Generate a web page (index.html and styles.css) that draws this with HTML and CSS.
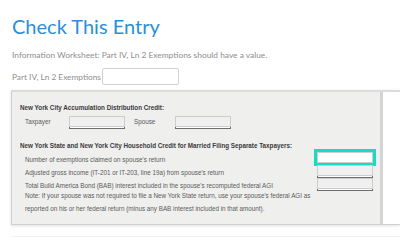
FILE: index.html
```html
<!DOCTYPE html>
<html>
<head>
<meta charset="utf-8">
<link rel="stylesheet" href="styles.css">
</head>
<body>
<div class="page">
  <h1 class="title">Check This Entry</h1>
  <p class="info">Information Worksheet: Part IV, Ln 2 Exemptions should have a value.</p>
  <div class="field">
    <label class="field-label">Part IV, Ln 2 Exemptions</label>
    <input class="field-input" type="text">
  </div>
</div>
<div class="frame">
  <div class="sheet">
    <div class="heading">New York City Accumulation Distribution Credit:</div>
    <div class="pair-row">
      <span class="pair-label">Taxpayer</span>
      <span class="box"></span>
      <span class="pair-label spouse">Spouse</span>
      <span class="box"></span>
    </div>
    <div class="heading second">New York State and New York City Household Credit for Married Filing Separate Taxpayers:</div>
    <div class="row">
      <span class="row-label">Number of exemptions claimed on spouse's return</span>
      <span class="box focus"></span>
    </div>
    <div class="row">
      <span class="row-label">Adjusted gross income (IT-201 or IT-203, line 19a) from spouse's return</span>
      <span class="box"></span>
    </div>
    <div class="row">
      <span class="row-label">Total Build America Bond (BAB) interest included in the spouse's recomputed federal AGI</span>
      <span class="box"></span>
    </div>
    <div class="note">Note: If your spouse was not required to file a New York State return, use your spouse's federal AGI as</div>
    <div class="note">reported on his or her federal return (minus any BAB interest included in that amount).</div>
  </div>
  <div class="bar"></div>
  <div class="blank"></div>
</div>
<div class="next"></div>
</body>
</html>
```
FILE: styles.css
```css
html, body {
  margin: 0;
  padding: 0;
  background: #fff;
  overflow: hidden;
}
body {
  width: 400px;
  height: 247px;
}
.page {
  padding: 14px 0 0 12px;
  font-family: Lato, "Open Sans", sans-serif;
}
.title {
  margin: 0;
  font-size: 20px;
  line-height: 24px;
  font-weight: 400;
  color: #2a8fd8;
}
.info {
  margin: 11px 0 0 0;
  font-size: 8.4px;
  line-height: 12px;
  color: #8e8e8e;
}
.field {
  display: flex;
  align-items: center;
  margin-top: 7px;
}
.field-label {
  font-size: 8.3px;
  color: #8e8e8e;
}
.field-input {
  box-sizing: border-box;
  width: 77px;
  height: 17px;
  margin: 0 0 0 1px;
  padding: 0;
  border: 1px solid #d2d2d2;
  border-radius: 2px;
  background: #fff;
}
.frame {
  display: flex;
  margin: 5px 0 0 11px;
  height: 132px;
  border-top: 2px solid #dcdcdc;
  border-left: 1px solid #cfcfcf;
  border-bottom: 1px solid #d0d0d0;
  box-shadow: 0 1px 3px rgba(0, 0, 0, 0.12);
}
.sheet {
  box-sizing: border-box;
  width: 368px;
  padding: 11px 7px 0 8px;
  background: #efefee;
  font-family: "Liberation Sans", Arial, sans-serif;
  font-size: 6.3px;
  color: #5a5a5a;
}
.bar {
  width: 3px;
  background: #d4d4d4;
}
.blank {
  flex: 1;
  background: #fff;
}
.heading {
  font-weight: 700;
  color: #3a3a3a;
  line-height: 10px;
}
.heading.second {
  margin-top: 13px;
}
.pair-row {
  display: flex;
  align-items: center;
  height: 14px;
  margin-top: 1px;
}
.pair-label {
  box-sizing: border-box;
  width: 49px;
  padding-left: 5px;
}
.pair-label.spouse {
  width: 50px;
  padding-left: 9px;
}
.box {
  box-sizing: border-box;
  display: block;
  width: 56px;
  height: 11px;
  background: #f0f0f0;
  border: 1px solid #cdcdcd;
  box-shadow: 0 2px 0 -1px #fff, 0 2px 0 #6d6d6d;
}
.box.focus {
  background: #fff;
  outline: 3px solid #16dcc4;
  box-shadow: none;
}
.row {
  display: flex;
  align-items: center;
  justify-content: space-between;
  height: 13px;
}
.row-label {
  padding-left: 5px;
  padding-top: 3px;
}
.note {
  padding-left: 5px;
  line-height: 12.5px;
}
.next {
  margin: 11px 0 0 11px;
  border-top: 1px solid #f2f2f2;
}
```
